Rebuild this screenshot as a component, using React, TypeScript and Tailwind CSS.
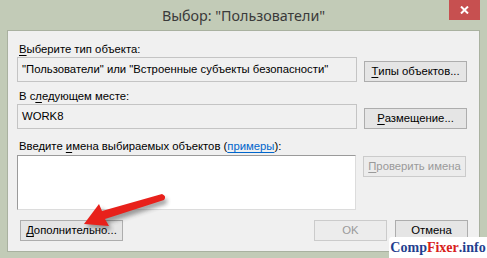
import React from "react";

const U = ({ c }: { c: string }) => <span className="underline underline-offset-2">{c}</span>;

const Btn = ({ children, disabled = false, w = "w-[103px]" }: { children: React.ReactNode; disabled?: boolean; w?: string }) => (
  <div
    className={`${w} h-[21px] flex items-center justify-center border text-[11.3px] ${
      disabled ? "border-[#cbcbcb] bg-[#ececec] text-[#9a9a9a]" : "border-[#adadad] bg-[#e5e5e5] text-black"
    }`}
  >
    {children}
  </div>
);

export default function App() {
  return (
    <div
      className="relative w-[487px] h-[258px] bg-[#c2cbb7] flex flex-col overflow-hidden"
      style={{ fontFamily: '"Liberation Sans", Arial, sans-serif' }}
    >
      {/* title bar */}
      <div className="h-[30px] flex items-center justify-center relative">
        <span className="text-[14.3px] text-[#3a3a3a] mt-[1px]" style={{ fontFamily: '"Noto Sans", sans-serif' }}>
          Выбор: "Пользователи"
        </span>
        <div className="absolute right-[7px] top-0 w-[31px] h-[20px] bg-[#c75050] flex items-center justify-center">
          <svg width="9" height="8" viewBox="0 0 9 8">
            <path d="M1 0.5 L8 7.5 M8 0.5 L1 7.5" stroke="white" strokeWidth="2" />
          </svg>
        </div>
      </div>
      {/* client */}
      <div className="mx-[7px] h-[222px] border border-[#a9b1a0] bg-[#f0f0f0] pl-[9px] pr-[11px] pt-[11px] text-[11.3px] text-black flex flex-col">
        <div className="h-[15px] leading-[15px] pl-[2px]">
          <U c="В" />ыберите тип объекта:
        </div>
        <div className="flex items-end gap-[7px] mt-[0px]">
          <div className="w-[340px] h-[25px] border border-[#c4c4c4] bg-[#f0f0f0] flex items-center pl-[4px]">
            "Пользователи" или "Встроенные субъекты безопасности"
          </div>
          <Btn>
            <U c="Т" />ипы объектов...
          </Btn>
        </div>
        <div className="h-[15px] leading-[15px] pl-[2px] mt-[7px]">
          В с<U c="л" />едующем месте:
        </div>
        <div className="flex items-end gap-[7px] mt-[0px]">
          <div className="w-[340px] h-[25px] border border-[#c4c4c4] bg-[#f0f0f0] flex items-center pl-[4px]">WORK8</div>
          <Btn>
            <U c="Р" />азмещение...
          </Btn>
        </div>
        <div className="h-[15px] leading-[15px] pl-[2px] mt-[10px]">
          Введите <U c="и" />мена выбираемых объектов (<span className="text-[#0066cc] underline underline-offset-2">примеры</span>):
        </div>
        <div className="flex items-start gap-[7px] mt-[1px]">
          <div className="w-[339px] h-[55px] border border-[#9a9a9a] border-r-[#dcdcdc] border-b-[#dcdcdc] bg-white" />
          <div className="mt-[1px]">
            <Btn disabled>
              <U c="П" />роверить имена
            </Btn>
          </div>
        </div>
        <div className="flex items-center mt-[10px] pl-[3px]">
          <Btn>
            <U c="Д" />ополнительно...
          </Btn>
          <div className="flex-1" />
          <Btn disabled w="w-[73px]">
            OK
          </Btn>
          <div className="w-[8px]" />
          <Btn w="w-[73px]">Отмена</Btn>
        </div>
      </div>
      {/* arrow */}
      <svg className="absolute left-0 top-0" width="487" height="258" viewBox="0 0 487 258">
        <defs>
          <filter id="sh" x="-20%" y="-20%" width="140%" height="140%">
            <feGaussianBlur stdDeviation="2" />
          </filter>
        </defs>
        <g transform="translate(2,3)" filter="url(#sh)" opacity="0.45">
          <path d="M163 195 L103 211 L100 205 L84 224 L110 227 L106 220 L164 201 Q167 198 163 195 Z" fill="#333" />
        </g>
        <path d="M162 194 L102 211 L99 204 L84 224 L109 226 L105 219 L164 200 Q167 196 162 194 Z" fill="#e8211b" />
      </svg>
      {/* watermark */}
      <div
        className="absolute left-[389px] top-[237px] w-[98px] h-[21px] bg-white flex items-center justify-center text-[14px] font-bold rounded-tl-[3px]"
        style={{ fontFamily: '"Liberation Serif", "DejaVu Serif", serif' }}
      >
        <span className="text-[#1f3f8f]">Comp</span>
        <span className="text-[#d8211b]">Fixer</span>
        <span className="text-[#1f3f8f]">.info</span>
      </div>
    </div>
  );
}
